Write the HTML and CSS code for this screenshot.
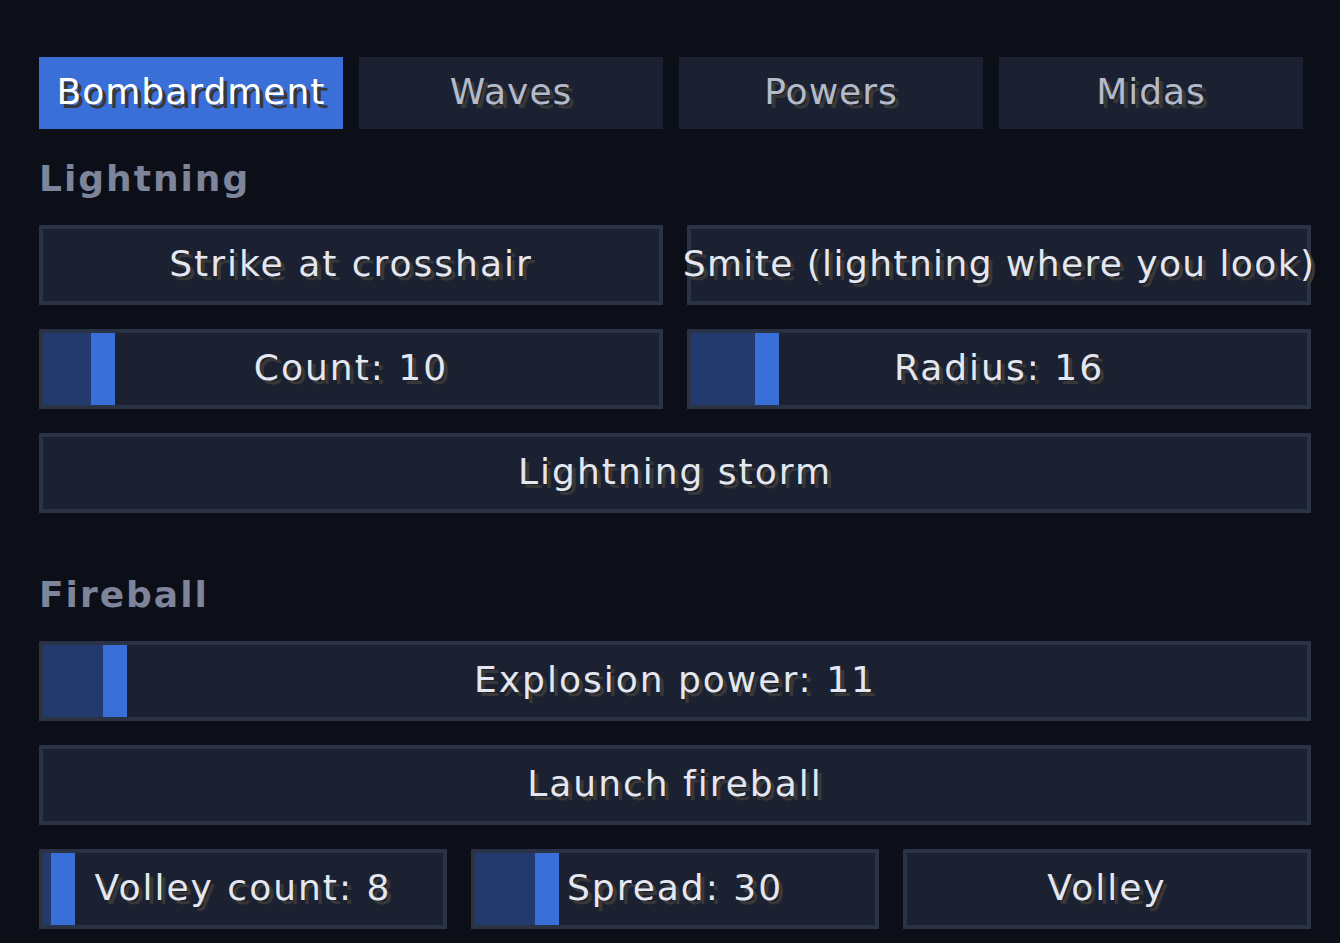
FILE: index.html
```html
<!DOCTYPE html>
<html lang="en">
<head>
<meta charset="utf-8">
<title>Bombardment</title>
<link rel="stylesheet" href="styles.css">
</head>
<body>
<div class="page">
  <div class="tabs">
    <div class="tab active">Bombardment</div>
    <div class="tab">Waves</div>
    <div class="tab">Powers</div>
    <div class="tab">Midas</div>
  </div>

  <div class="heading first">Lightning</div>
  <div class="row two">
    <div class="btn"><span class="label">Strike at crosshair</span></div>
    <div class="btn"><span class="label tight">Smite (lightning where you look)</span></div>
  </div>
  <div class="row two">
    <div class="btn slider">
      <div class="track"><div class="fill" style="width:48px"></div><div class="handle"></div></div>
      <span class="label">Count: 10</span>
    </div>
    <div class="btn slider">
      <div class="track"><div class="fill" style="width:64px"></div><div class="handle"></div></div>
      <span class="label">Radius: 16</span>
    </div>
  </div>
  <div class="row one">
    <div class="btn"><span class="label">Lightning storm</span></div>
  </div>

  <div class="heading second">Fireball</div>
  <div class="row one">
    <div class="btn slider">
      <div class="track"><div class="fill" style="width:60px"></div><div class="handle"></div></div>
      <span class="label">Explosion power: 11</span>
    </div>
  </div>
  <div class="row one">
    <div class="btn"><span class="label">Launch fireball</span></div>
  </div>
  <div class="row three">
    <div class="btn slider">
      <div class="track"><div class="fill" style="width:8px"></div><div class="handle"></div></div>
      <span class="label">Volley count: 8</span>
    </div>
    <div class="btn slider">
      <div class="track"><div class="fill" style="width:60px"></div><div class="handle"></div></div>
      <span class="label">Spread: 30</span>
    </div>
    <div class="btn"><span class="label">Volley</span></div>
  </div>
</div>
</body>
</html>
```

FILE: styles.css
```css
html, body {
  margin: 0;
  padding: 0;
}
body {
  background: #0c0f18;
  width: 1340px;
  height: 943px;
  overflow: hidden;
  font-family: "DejaVu Sans", "Liberation Sans", sans-serif;
}
.page {
  padding: 57px 0 0 39px;
  width: 1272px;
}
.tabs {
  display: flex;
  gap: 16px;
}
.tab {
  width: 304px;
  height: 72px;
  background: #1b2131;
  color: #b4bac8;
  display: flex;
  align-items: center;
  justify-content: center;
  font-size: 36px;
  letter-spacing: 1px;
  text-shadow: 4px 4px 0 #383838;
  padding-bottom: 4px;
  box-sizing: border-box;
}
.tab.active {
  background: #3a6fd8;
  color: #ffffff;
}
.heading {
  font-weight: bold;
  font-size: 36px;
  line-height: 40px;
  letter-spacing: 2px;
  color: #7e8499;
  margin-bottom: 26px;
}
.heading.first { margin-top: 30px; }
.heading.second { margin-top: 62px; }
.row {
  display: grid;
  gap: 24px;
  margin-bottom: 24px;
}
.row.one { grid-template-columns: minmax(0, 1fr); }
.row.two { grid-template-columns: repeat(2, minmax(0, 1fr)); }
.row.three { grid-template-columns: repeat(3, minmax(0, 1fr)); }
.btn {
  height: 80px;
  box-sizing: border-box;
  border: 4px solid #2a3345;
  background: #1b2130;
  display: grid;
  grid-template-columns: minmax(0, 1fr);
  grid-template-rows: minmax(0, 1fr);
  align-items: center;
  justify-items: center;
  min-width: 0;
}
.label {
  grid-area: 1 / 1;
  justify-self: unsafe center;
  white-space: nowrap;
  font-size: 36px;
  letter-spacing: 2px;
  color: #e4e7f0;
  text-shadow: 4px 4px 0 #383838;
  padding-bottom: 4px;
}
.label.tight {
  letter-spacing: 1.4px;
}
.track {
  grid-area: 1 / 1;
  justify-self: stretch;
  align-self: stretch;
  display: flex;
}
.fill {
  background: #233a6e;
}
.handle {
  width: 24px;
  background: #3a6fd8;
}
```
